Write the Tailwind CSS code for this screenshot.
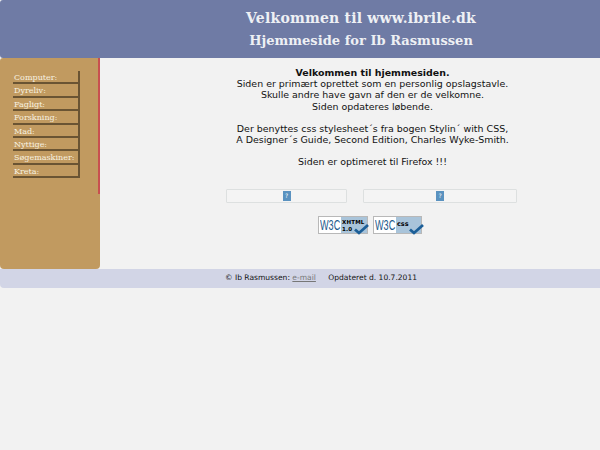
<!DOCTYPE html>
<html><head><meta charset="utf-8"><script src="https://cdn.jsdelivr.net/npm/@tailwindcss/browser@4"></script></head>
<body class="bg-[#f2f2f2] font-['DejaVu_Sans',sans-serif] text-[#111] overflow-hidden">
<div class="w-[600px]">
<header class="h-[58px] bg-[#6f7ba5] rounded-tl-[3px] rounded-bl-[3px] text-center font-['DejaVu_Serif',serif] font-bold text-[#eef0f4] pl-[122px]">
  <div class="text-[14px] leading-[20px] pt-[8px] tracking-[0.2px]">Velkommen til www.ibrile.dk</div>
  <div class="text-[13px] leading-[18px] pt-[4px] tracking-[0.03px]">Hjemmeside for Ib Rasmussen</div>
</header>
<div class="flex h-[211px]">
  <aside class="w-[100px] bg-[#c19a60] rounded-tl-[3px] rounded-bl-[4px] rounded-br-[4px] shrink-0">
    <div class="border-r-2 border-[#c8504f] h-[136px] w-[100px] pt-[13px] pl-[13px]">
      <ul class="font-['DejaVu_Serif',serif] text-[8px] text-[#f8f2e0]">
        <li class="w-[67px] h-[13.4px] leading-[13px] pl-[1px] border-r-2 border-b-2 border-[#6a5433]">Computer:</li>
        <li class="w-[67px] h-[13.4px] leading-[13px] pl-[1px] border-r-2 border-b-2 border-[#6a5433]">Dyreliv:</li>
        <li class="w-[67px] h-[13.4px] leading-[13px] pl-[1px] border-r-2 border-b-2 border-[#6a5433]">Fagligt:</li>
        <li class="w-[67px] h-[13.4px] leading-[13px] pl-[1px] border-r-2 border-b-2 border-[#6a5433]">Forskning:</li>
        <li class="w-[67px] h-[13.4px] leading-[13px] pl-[1px] border-r-2 border-b-2 border-[#6a5433]">Mad:</li>
        <li class="w-[67px] h-[13.4px] leading-[13px] pl-[1px] border-r-2 border-b-2 border-[#6a5433]">Nyttige:</li>
        <li class="w-[67px] h-[13.4px] leading-[13px] pl-[1px] border-r-2 border-b-2 border-[#6a5433]">Søgemaskiner:</li>
        <li class="w-[67px] h-[13.4px] leading-[13px] pl-[1px] border-r-2 border-b-2 border-[#6a5433]">Kreta:</li>
      </ul>
    </div>
  </aside>
  <main class="flex-1 text-center text-[9.45px] leading-[11.2px] pt-[9px] pl-[45px]">
    <p class="font-bold">Velkommen til hjemmesiden.</p>
    <p>Siden er primært oprettet som en personlig opslagstavle.</p>
    <p>Skulle andre have gavn af den er de velkomne.</p>
    <p>Siden opdateres løbende.</p>
    <p class="pt-[11px]">Der benyttes css stylesheet´s fra bogen Stylin´ with CSS,</p>
    <p>A Designer´s Guide, Second Edition, Charles Wyke-Smith.</p>
    <p class="pt-[11px]">Siden er optimeret til Firefox !!!</p>
    <div class="flex mt-[22px] ml-[81px] gap-[16px]">
      <div class="w-[121px] h-[14px] border border-[#dde0e0] rounded-[1px] bg-[#f4f4f4] flex items-center justify-center"><span class="w-[8px] h-[10px] bg-[#5a92c0] text-white text-[6px] leading-[10px] block">?</span></div>
      <div class="w-[154px] h-[14px] border border-[#dde0e0] rounded-[1px] bg-[#f4f4f4] flex items-center justify-center"><span class="w-[8px] h-[10px] bg-[#5a92c0] text-white text-[6px] leading-[10px] block">?</span></div>
    </div>
    <div class="flex justify-center gap-[5px] mt-[13px] mr-[5px]">
      <div class="relative w-[50px] h-[18px] flex bg-[#a9c4da] border border-[#b8b8b8]">
        <span class="w-[22px] bg-white text-[#1c5a8c] font-['Liberation_Sans',sans-serif] text-[14px] leading-[16px] text-left pl-[1px] overflow-hidden"><span class="block scale-x-[.65] origin-left">W3C</span></span>
        <span class="text-[5.5px] font-bold leading-[6.5px] text-left pl-[1px] pt-[2px] tracking-[0.2px] text-black">XHTML<br>1.0</span>
        <svg class="absolute right-[-3px] bottom-[-2px]" width="16" height="12" viewBox="0 0 16 12"><path d="M1 6.5l4 3.5 9-8" fill="none" stroke="#1c5f98" stroke-width="2.8"/></svg>
      </div>
      <div class="relative w-[49px] h-[18px] flex bg-[#a9c4da] border border-[#b8b8b8]">
        <span class="w-[22px] bg-white text-[#1c5a8c] font-['Liberation_Sans',sans-serif] text-[14px] leading-[16px] text-left pl-[1px] overflow-hidden"><span class="block scale-x-[.65] origin-left">W3C</span></span>
        <span class="text-[6.5px] font-bold leading-[15px] text-left pl-[1px] text-black">css</span>
        <svg class="absolute right-[-4px] bottom-[-2px]" width="16" height="12" viewBox="0 0 16 12"><path d="M1 6.5l4 3.5 9-8" fill="none" stroke="#1c5f98" stroke-width="2.8"/></svg>
      </div>
    </div>
  </main>
</div>
<footer class="h-[19px] bg-[#d2d5e6] rounded-bl-[4px] text-[7.56px] leading-[18px] text-center pl-[42px]">
  <span class="pr-[10px]">© Ib Rasmussen: <a class="underline text-[#777]">e-mail</a></span> <span>Opdateret d. 10.7.2011</span>
</footer>
</div>
</body></html>
